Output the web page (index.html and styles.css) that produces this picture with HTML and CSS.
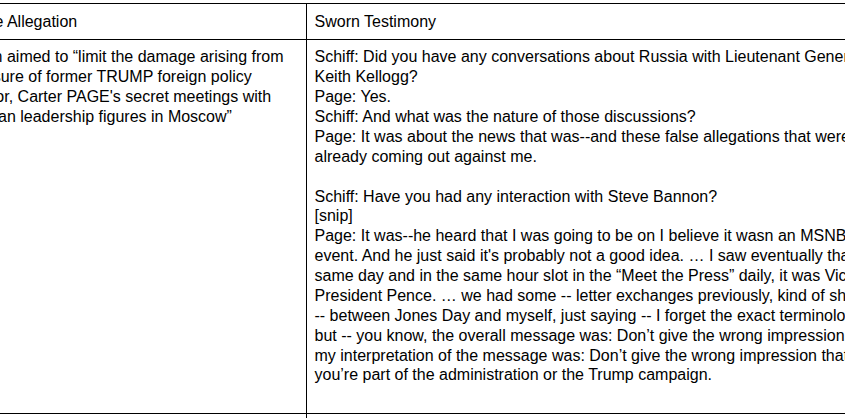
FILE: index.html
```html
<!DOCTYPE html>
<html lang="en">
<head>
<meta charset="utf-8">
<title>Allegation vs. Sworn Testimony</title>
<link rel="stylesheet" href="styles.css">
</head>
<body>
<table class="doc-table">
  <colgroup>
    <col class="col-allegation">
    <col class="col-testimony">
  </colgroup>
  <thead>
    <tr>
      <th class="cell">Steele Allegation</th>
      <th class="cell">Sworn Testimony</th>
    </tr>
  </thead>
  <tbody>
    <tr>
      <td class="cell">
        <p class="para">A plan aimed to “limit the damage arising from exposure of former TRUMP foreign policy advisor, Carter PAGE's secret meetings with Russian leadership figures in Moscow”</p>
      </td>
      <td class="cell">
        <p class="para">Schiff: Did you have any conversations about Russia with Lieutenant General<br>Keith Kellogg?</p>
        <p class="para">Page: Yes.</p>
        <p class="para">Schiff: And what was the nature of those discussions?</p>
        <p class="para">Page: It was about the news that was--and these false allegations that were<br>already coming out against me.</p>
        <p class="para"><br></p>
        <p class="para">Schiff: Have you had any interaction with Steve Bannon?</p>
        <p class="para">[snip]</p>
        <p class="para">Page: It was--he heard that I was going to be on I believe it wasn an MSNBC<br>event. And he just said it's probably not a good idea. … I saw eventually that<br>same day and in the same hour slot in the “Meet the Press” daily, it was Vice<br>President Pence. … we had some -- letter exchanges previously, kind of short<br>-- between Jones Day and myself, just saying -- I forget the exact terminology,<br>but -- you know, the overall message was: Don’t give the wrong impression --<br>my interpretation of the message was: Don’t give the wrong impression that<br>you’re part of the administration or the Trump campaign.</p>
        <p class="para"><br></p>
      </td>
    </tr>
    <tr>
      <td class="cell"><p class="para"><br></p></td>
      <td class="cell"><p class="para"><br></p></td>
    </tr>
  </tbody>
</table>
</body>
</html>
```

FILE: styles.css
```css
html, body {
  margin: 0;
  padding: 0;
  overflow: hidden;
  background: #ffffff;
}

body {
  width: 845px;
  height: 418px;
  font-family: "Liberation Sans", Arial, sans-serif;
  font-size: 16px;
  line-height: 19.87px;
  color: #000000;
}

.doc-table {
  border-collapse: separate;
  border-spacing: 0;
  table-layout: fixed;
  width: 1013.5px;
  margin: 3px 0 0 -50.5px;
  border-top: 1px solid #000000;
  border-left: 1px solid #000000;
}

.col-allegation {
  width: 356.5px;
}

.col-testimony {
  width: 656px;
}

.cell {
  padding: 7.5px;
  border-right: 1px solid #000000;
  border-bottom: 1px solid #000000;
  text-align: left;
  vertical-align: top;
  font-weight: normal;
}

.para {
  margin: 0;
}
```
